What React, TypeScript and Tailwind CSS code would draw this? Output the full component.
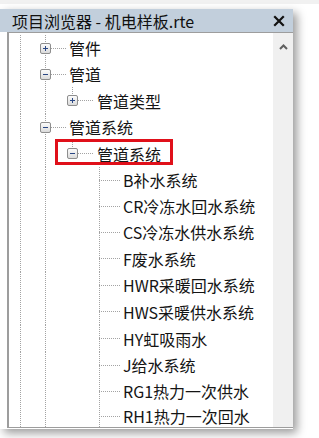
import React from "react";

type Seg = { x: number; span: "full" | "top" | "bottom" };

interface Row {
  label: string;
  level: 1 | 2 | 3;
  toggle?: "plus" | "minus";
  h: number;
  lines: Seg[];
  marked?: boolean;
}

// x positions are relative to the inner left edge of the tree pane
const L0 = 11;
const L1 = 36;
const L2 = 63;
const L3 = 90;

const textX = { 1: 60, 2: 88, 3: 114 } as const;
const boxX = { 1: L1, 2: L2, 3: L3 } as const;

const base: Seg[] = [
  { x: L0, span: "full" },
  { x: L1, span: "full" },
];

const children = [
  "B补水系统",
  "CR冷冻水回水系统",
  "CS冷冻水供水系统",
  "F废水系统",
  "HWR采暖回水系统",
  "HWS采暖供水系统",
  "HY虹吸雨水",
  "J给水系统",
  "RG1热力一次供水",
  "RH1热力一次回水",
];
const childHeights = [26, 26, 26, 27, 26, 27, 27, 26, 26, 24];

const rows: Row[] = [
  { label: "管件", level: 1, toggle: "plus", h: 26, lines: base },
  { label: "管道", level: 1, toggle: "minus", h: 26, lines: [...base, { x: L2, span: "bottom" }] },
  { label: "管道类型", level: 2, toggle: "plus", h: 27, lines: [...base, { x: L2, span: "top" }] },
  { label: "管道系统", level: 1, toggle: "minus", h: 26, lines: [...base, { x: L2, span: "bottom" }] },
  {
    label: "管道系统",
    level: 2,
    toggle: "minus",
    h: 27,
    marked: true,
    lines: [...base, { x: L2, span: "top" }, { x: L3, span: "bottom" }],
  },
  ...children.map((label, i) => ({
    label,
    level: 3 as const,
    h: childHeights[i],
    lines: [...base, { x: L3, span: "full" as const }],
  })),
];

const heightClass: Record<number, string> = {
  24: "h-[24px]",
  26: "h-[26px]",
  27: "h-[27px]",
};

const Connectors = ({ row }: { row: Row }) => {
  const w = textX[row.level];
  const cy = Math.floor(row.h / 2);
  const bx = boxX[row.level];
  const dot = { stroke: "#a3a3a3", strokeWidth: 1, strokeDasharray: "1 1" };

  return (
    <svg width={w} height={row.h} className="shrink-0 block">
      {row.lines.map((s, i) => {
        const y1 = s.span === "bottom" ? cy : 0;
        const y2 = s.span === "top" ? cy : row.h;
        return <line key={i} x1={s.x + 0.5} x2={s.x + 0.5} y1={y1} y2={y2} {...dot} />;
      })}
      <line x1={bx} x2={w - 3} y1={cy + 0.5} y2={cy + 0.5} {...dot} />
      {row.toggle && (
        <g>
          <defs>
            <linearGradient id="tg" x1="0" y1="0" x2="0" y2="1">
              <stop offset="0" stopColor="#fdfdfd" />
              <stop offset="1" stopColor="#d9d9d9" />
            </linearGradient>
          </defs>
          <rect
            x={bx - 4.5}
            y={cy - 4.5}
            width={10}
            height={10}
            rx={1.5}
            fill="url(#tg)"
            stroke="#8e8e8e"
          />
          <line x1={bx - 2} x2={bx + 3} y1={cy + 0.5} y2={cy + 0.5} stroke="#2a4784" strokeWidth={1} />
          {row.toggle === "plus" && (
            <line x1={bx + 0.5} x2={bx + 0.5} y1={cy - 2} y2={cy + 3} stroke="#2a4784" strokeWidth={1} />
          )}
        </g>
      )}
    </svg>
  );
};

const TreeRow = ({ row }: { row: Row }) => (
  <div className={`relative flex items-center ${heightClass[row.h]}`}>
    <Connectors row={row} />
    <span className="whitespace-nowrap text-[16px] leading-none text-[#141414]">{row.label}</span>
    {/* red annotation frame */}
    {row.marked && (
      <div className="absolute left-[46px] top-[-1px] w-[118px] h-[26px] border-[3px] border-[#e0101a]" />
    )}
  </div>
);

const App: React.FC = () => {
  return (
    <div className="w-[319px] h-[438px] bg-white overflow-hidden font-['Noto_Sans_CJK_SC','Noto_Sans',sans-serif]">
      <div className="h-[4px] bg-[#f1f1f1]" />
      <div className="mt-[5px] w-[293px] h-[420px] bg-white flex flex-col shadow-[4px_4px_9px_rgba(0,0,0,0.4)]">
        {/* Title bar */}
        <div className="h-[23px] bg-[#c2cfdc] flex items-center pl-[12px] pr-[5px]">
          <span className="text-[16px] leading-none text-[#111] whitespace-nowrap">
            项目浏览器 - 机电样板.rte
          </span>
          <svg width="12" height="12" viewBox="0 0 12 12" className="ml-auto mr-[3px]">
            <path d="M2 2 L10 10 M10 2 L2 10" stroke="#111" strokeWidth="2.2" strokeLinecap="square" />
          </svg>
        </div>

        {/* Tree pane */}
        <div className="flex-1 flex pl-[7px] pb-[1px] min-h-0">
          <div className="flex-1 flex border-l-2 border-t border-b border-[#9d9d9d] min-h-0">
            <div className="flex-1 pt-[2px] overflow-hidden">
              {rows.map((row, i) => (
                <TreeRow key={i} row={row} />
              ))}
            </div>
            <div className="w-[20px] bg-[#f0f0f0] flex justify-center pt-[11px]">
              <svg width="9" height="6" viewBox="0 0 9 6">
                <path d="M1 5 L4.5 1.5 L8 5" fill="none" stroke="#606060" strokeWidth="2" />
              </svg>
            </div>
          </div>
        </div>
      </div>
    </div>
  );
};

export default App;
